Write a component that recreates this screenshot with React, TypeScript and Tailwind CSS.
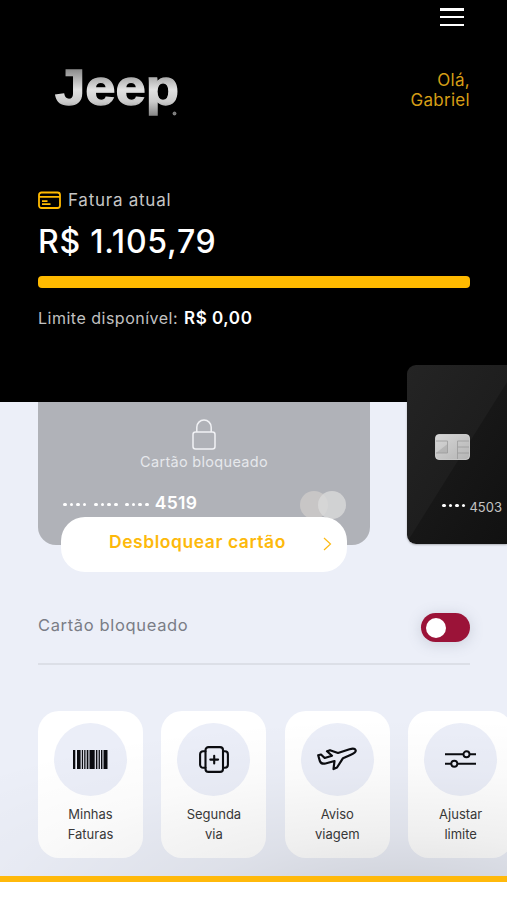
import React from "react";

const Logo = () => (
  <svg width="134" height="80" viewBox="0 -12 134 80" className="-mt-[12px] block">
    <defs>
      <linearGradient id="chrome" gradientUnits="userSpaceOnUse" x1="0" y1="2" x2="0" y2="50">
        <stop offset="0" stopColor="#858585" />
        <stop offset="0.45" stopColor="#e2e2e2" />
        <stop offset="0.7" stopColor="#cccccc" />
        <stop offset="1" stopColor="#858585" />
      </linearGradient>
    </defs>
    <text
      x="1"
      y="38.5"
      textLength="124"
      lengthAdjust="spacingAndGlyphs"
      fontFamily="Liberation Sans, sans-serif"
      fontWeight="700"
      fontSize="50"
      fill="url(#chrome)"
      stroke="url(#chrome)"
      strokeWidth="1.3"
    >
      Jeep
    </text>
    <circle cx="120.5" cy="47.5" r="1.5" fill="#777" stroke="#aaa" strokeWidth="0.7" />
  </svg>
);

const InvoiceIcon = () => (
  <svg width="23" height="18" viewBox="0 0 23 18" fill="none" stroke="#ffba00" strokeWidth="1.8" className="block">
    <rect x="1" y="1.5" width="21" height="15.5" rx="2.5" />
    <path d="M1 5.800h21M4 10.200h5.500M4 13.200h8.500" />
  </svg>
);

const LockIcon = () => (
  <svg width="24" height="31" viewBox="0 0 24 31" fill="none" stroke="#f1f2f5" strokeWidth="1.5" className="block">
    <rect x="1" y="13" width="22" height="17" rx="2.5" />
    <path d="M4.8 13V8.2a7.2 7.2 0 0 1 14.4 0V13" />
  </svg>
);

const Chip = () => (
  <svg width="35" height="26" viewBox="0 0 35 26" className="block">
    <defs>
      <linearGradient id="chip" x1="0" y1="0" x2="1" y2="1">
        <stop offset="0" stopColor="#d6d6d6" />
        <stop offset="0.5" stopColor="#c6c6c6" />
        <stop offset="1" stopColor="#b4b4b4" />
      </linearGradient>
    </defs>
    <rect x="0.5" y="0.5" width="34" height="25" rx="3.5" fill="url(#chip)" stroke="#dedede" strokeWidth="0.8" />
    <path d="M1 19 12.5 10v9z" fill="#999" opacity="0.4" />
    <path d="M1 7h11.500v12H1M22.500 25V7H34M22.500 13H34M22.500 19H34" fill="none" stroke="#9a9a9a" strokeWidth="0.8" />
  </svg>
);

const BarcodeIcon = () => (
  <svg width="35" height="19" viewBox="0 0 35 19" fill="#0b0c10" className="block">
    <path d="M0 0h2.300v19H0zM4 0h3.600v19H4zM8.800 0h1.300v19H8.800zM11.200 0h1.300v19h-1.300zM13.700 0h1.700v19h-1.700zM16.500 0h5.200v19h-5.200zM22.900 0h1.500v19h-1.500zM25.600 0h1.300v19h-1.300zM28 0h1.400v19H28zM30.500 0h4v19h-4z" />
  </svg>
);

const ReissueIcon = () => (
  <svg width="30" height="27" viewBox="0 0 30 27" fill="none" stroke="#0b0c10" strokeWidth="2.100" strokeLinecap="round" className="block">
    <rect x="6.500" y="1.100" width="17.500" height="24.800" rx="3" />
    <path d="M6.500 5.200H4.300A3 3 0 0 0 1.100 8.200v10.600a3 3 0 0 0 3.200 3h2.200M24 5.200h1.900a3 3 0 0 1 3 3v10.600a3 3 0 0 1-3 3H24M15.200 9.700v7.800M11.300 13.600h7.800" />
  </svg>
);

const PlaneIcon = () => (
  <svg width="40" height="24" viewBox="0 0 40 24" fill="none" stroke="#0b0c10" strokeWidth="2.200" strokeLinejoin="round" className="block">
    <path d="M1.200 8.200 4 7.500 7.700 11l7.300-2.300-5-4.500L13 3.200 21 6 32.500 2.300C36 1.300 38.100 1.800 38.600 3.100c.6 1.500-1.400 3.400-4.700 4.700L26 11.200l-6 9.300-3.500 1.600 1-8.100-9 2.500c-2.600.6-4.600.2-5.600-2.300z" />
  </svg>
);

const SlidersIcon = () => (
  <svg width="31" height="18" viewBox="0 0 31 18" fill="none" stroke="#0b0c10" strokeWidth="1.900" className="block">
    <path d="M0 4.300h18.500M24.500 4.300H31M0 13.700h6.300M12.300 13.700H31" />
    <circle cx="21.500" cy="4.300" r="3" />
    <circle cx="9.300" cy="13.700" r="3" />
  </svg>
);

const Dots = ({ groups, className }: { groups: number; className: string }) => (
  <div className={className}>
    {Array.from({ length: groups }, (_, g) => (
      <div key={g} className="flex gap-[2.900px]">
        {[0, 1, 2, 3].map((d) => (
          <span key={d} className="size-[3.700px] rounded-full bg-white" />
        ))}
      </div>
    ))}
  </div>
);

const shortcuts = [
  { lines: ["Minhas", "Faturas"], icon: <BarcodeIcon /> },
  { lines: ["Segunda", "via"], icon: <ReissueIcon /> },
  { lines: ["Aviso", "viagem"], icon: <PlaneIcon /> },
  { lines: ["Ajustar", "limite"], icon: <SlidersIcon /> },
];

export default function App() {
  return (
    <div className="h-[900px] w-[507px] overflow-hidden bg-white font-['Inter',sans-serif]">
      <header className="h-[401.500px] bg-black pl-[38px] pr-[37px]">
        <div className="flex h-[66px] justify-end pr-[6px] pt-[8px]">
          <button className="flex h-[18px] w-[24px] flex-col justify-between" aria-label="Menu">
            <span className="h-[2.500px] w-full bg-white" />
            <span className="h-[2.500px] w-full bg-white" />
            <span className="h-[2.500px] w-full bg-white" />
          </button>
        </div>
        <div className="flex h-[125px] items-start justify-between pl-[16px]">
          <Logo />
          <p className="mt-[5px] text-right text-[17px] leading-[19.500px] tracking-[0.300px] text-[#d69e16]">
            Olá,
            <br />
            Gabriel
          </p>
        </div>
        <div className="flex h-[18px] items-center gap-[7px]">
          <InvoiceIcon />
          <span className="mt-[2px] text-[17px] tracking-[0.750px] text-[#c6c6c6]">Fatura atual</span>
        </div>
        <p className="mt-[13px] text-[32px] font-medium leading-10 tracking-[0.750px] text-white">R$ 1.105,79</p>
        <div className="mt-[14px] h-3 rounded-[4px] bg-[#ffba00]" />
        <p className="mt-[18px] flex text-[16px] leading-6">
          <span className="w-[146px] tracking-[0.500px] text-[#c2c2c2]">Limite disponível:</span>
          <span className="text-[17px] font-semibold tracking-[0.550px] text-white">R$ 0,00</span>
        </p>
      </header>

      <main className="relative h-[474.500px] bg-[#eceff8]">
        <div className="flex h-[171px] justify-between">
          <div className="ml-[38px] h-[143px] w-[332px] rounded-b-[18px] bg-[#b0b2b8]">
            <div className="flex flex-col items-center pt-[17.500px]">
              <LockIcon />
              <span className="mt-[2px] text-[14.500px] leading-5 tracking-[0.300px] text-[#e6e8ec]">Cartão bloqueado</span>
            </div>
            <div className="mt-[19px] flex h-[30.500px] items-start pl-[25px] pr-[24px]">
              <Dots groups={3} className="mt-[11.500px] flex gap-[7.700px]" />
              <span className="ml-[6px] text-[17.500px] font-semibold leading-6 tracking-[0.350px] text-white">4519</span>
              <div className="ml-auto flex">
                <span className="size-[28px] rounded-full bg-[#c8c6c6]" />
                <span className="-ml-[10px] size-[28px] rounded-full bg-[#dadada]/80" />
              </div>
            </div>
            <button className="relative -mt-[5px] ml-[23px] flex h-[55.500px] w-[286px] items-center rounded-[24px] bg-white pl-[48px] pr-[15px]">
              <span className="mb-[5px] text-[17.500px] font-semibold tracking-[0.550px] text-[#fdb90b]">Desbloquear cartão</span>
              <svg width="9" height="14" viewBox="0 0 9 14" fill="none" stroke="#fdba14" strokeWidth="1.200" className="ml-auto">
                <path d="m1 1 6.500 6L1 13" />
              </svg>
            </button>
          </div>
          <div className="relative -mt-[36.500px] h-[179px] w-[100px] overflow-hidden rounded-l-[9px] bg-[linear-gradient(122deg,#242424_0%,#1e1e1e_52%,#171717_52.500%,#111_100%)] pl-[28px] pt-[69px] shadow-[0_1px_2px_#0004]">
            <Chip />
            <div className="mt-[37px] flex items-center gap-[4px] pl-[7px]">
              <Dots groups={1} className="-mt-[3px] flex" />
              <span className="text-[13px] leading-5 text-[#c4c4c4]">4503</span>
            </div>
          </div>
        </div>

        <div className="ml-[38px] mr-[37px] flex h-[92px] items-center justify-between border-b-2 border-[#dcdfe7] pt-[20px]">
          <span className="mb-[5px] text-[16.500px] tracking-[0.650px] text-[#7a7d86]">Cartão bloqueado</span>
          <button role="switch" aria-checked="false" className="flex h-[29px] w-[49px] items-center rounded-full bg-[#9b1338] pl-[5px] shadow-[0_2px_14px_#65708440]">
            <span className="size-[20px] rounded-full bg-white" />
          </button>
        </div>

        <div className="ml-[38px] mt-[46px] flex gap-[18.400px] overflow-hidden">
          {shortcuts.map(({ lines, icon }) => (
            <div key={lines[0]} className="flex h-[147.500px] w-[105px] shrink-0 flex-col items-center rounded-[21px] bg-white pt-[12px]">
              <div className="flex size-[73px] items-center justify-center rounded-full bg-[#ebeef8]">{icon}</div>
              <p className="mt-[9.500px] text-center text-[13px] leading-[19.500px] text-[#3a3a3a]">
                {lines[0]}
                <br />
                {lines[1]}
              </p>
            </div>
          ))}
        </div>

        <div className="pointer-events-none absolute inset-x-0 bottom-0 h-[180px] bg-[radial-gradient(115%_100%_at_80%_112%,#00000021_0%,#00000010_35%,#00000005_70%,#0000_100%)]" />
      </main>
      <div className="h-[6px] bg-[#ffb90b]" />
    </div>
  );
}
